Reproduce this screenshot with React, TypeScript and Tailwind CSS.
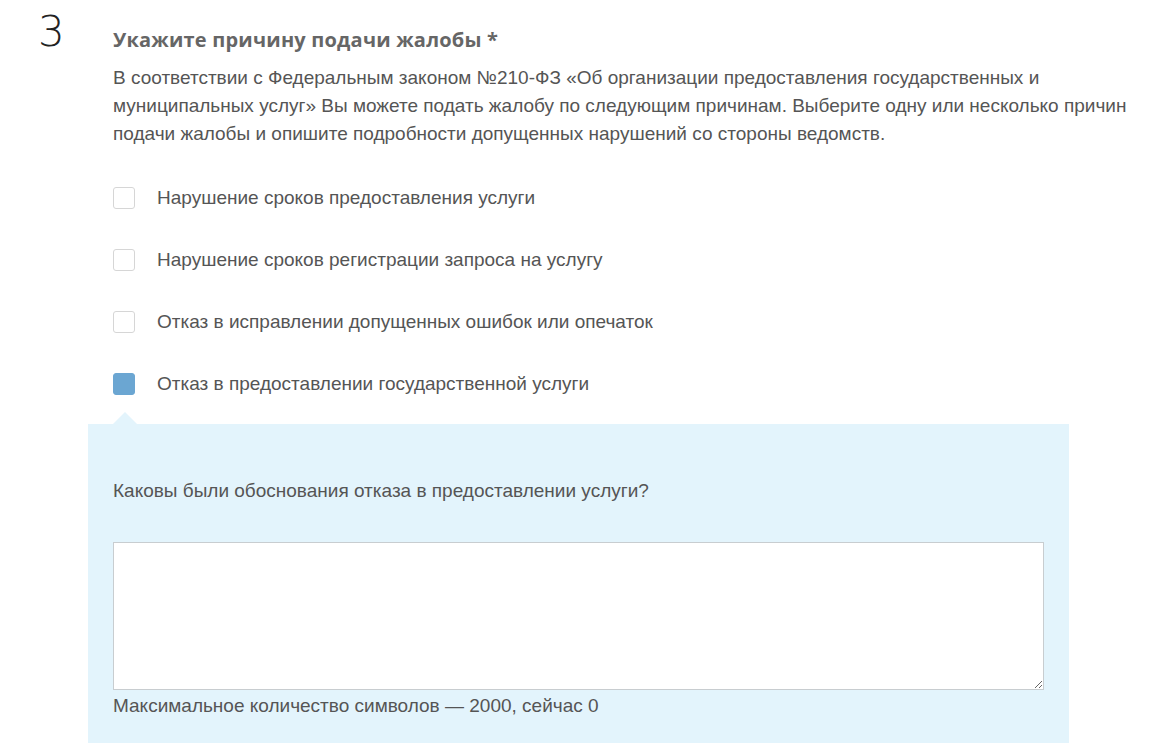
import React, { useState } from "react";

const reasons = [
  "Нарушение сроков предоставления услуги",
  "Нарушение сроков регистрации запроса на услугу",
  "Отказ в исправлении допущенных ошибок или опечаток",
  "Отказ в предоставлении государственной услуги",
];

export default function App() {
  const [checked, setChecked] = useState<boolean[]>([false, false, false, true]);
  const [text, setText] = useState("");

  const toggle = (i: number) => {
    setChecked(prev => prev.map((v, idx) => (idx === i ? !v : v)));
  };

  return (
    <div className="min-h-[743px] bg-white font-['Liberation_Sans',Arial,sans-serif] text-[#555]">
      <div className="flex">
        <div className="w-[113px] shrink-0 pl-[38px] pt-[8px] font-['DejaVu_Sans',sans-serif] text-[42px] font-extralight leading-[48px] text-[#222]">
          3
        </div>
        <div className="w-[1020px] pt-[26px]">
          <h2 className="font-['Open_Sans',sans-serif] text-[20px] font-bold leading-[28px] tracking-[0.2px] text-[#666]">
            Укажите причину подачи жалобы *
          </h2>
          <p className="mt-[10px] text-[19px] leading-[28px]">
            В соответствии с Федеральным законом №210-ФЗ «Об организации предоставления государственных и
            муниципальных услуг» Вы можете подать жалобу по следующим причинам. Выберите одну или несколько причин
            подачи жалобы и опишите подробности допущенных нарушений со стороны ведомств.
          </p>
          <div className="mt-[39px] flex flex-col gap-[40px]">
            {reasons.map((r, i) => (
              <label key={r} className="flex h-[22px] cursor-pointer items-center gap-[22px]" onClick={() => toggle(i)}>
                <span
                  className={
                    checked[i]
                      ? "h-[22px] w-[22px] shrink-0 rounded-[3px] border border-[#6ba6d2] bg-[#6ba6d2]"
                      : "h-[22px] w-[22px] shrink-0 rounded-[3px] border border-[#d6d6d6] bg-white"
                  }
                />
                <span className="text-[19px]">{r}</span>
              </label>
            ))}
          </div>
        </div>
      </div>

      {checked[3] && (
        <div className="relative ml-[88px] mt-[29px] w-[981px] bg-[#e3f4fc] px-[25px] pb-[30px] pt-[55px]">
          <div className="absolute -top-[12px] left-[25px] h-0 w-0 border-x-[12px] border-b-[12px] border-x-transparent border-b-[#e3f4fc]" />
          <div className="text-[19px] leading-[24px]">Каковы были обоснования отказа в предоставлении услуги?</div>
          <textarea
            value={text}
            maxLength={2000}
            onChange={e => setText(e.target.value)}
            className="mt-[39px] block h-[148px] w-[931px] border border-[#c8cdd0] bg-white p-2 text-[17px] outline-none"
          />
          <div className="mt-[4px] text-[19px] leading-[24px]">
            Максимальное количество символов — 2000, сейчас {text.length}
          </div>
        </div>
      )}
    </div>
  );
}
